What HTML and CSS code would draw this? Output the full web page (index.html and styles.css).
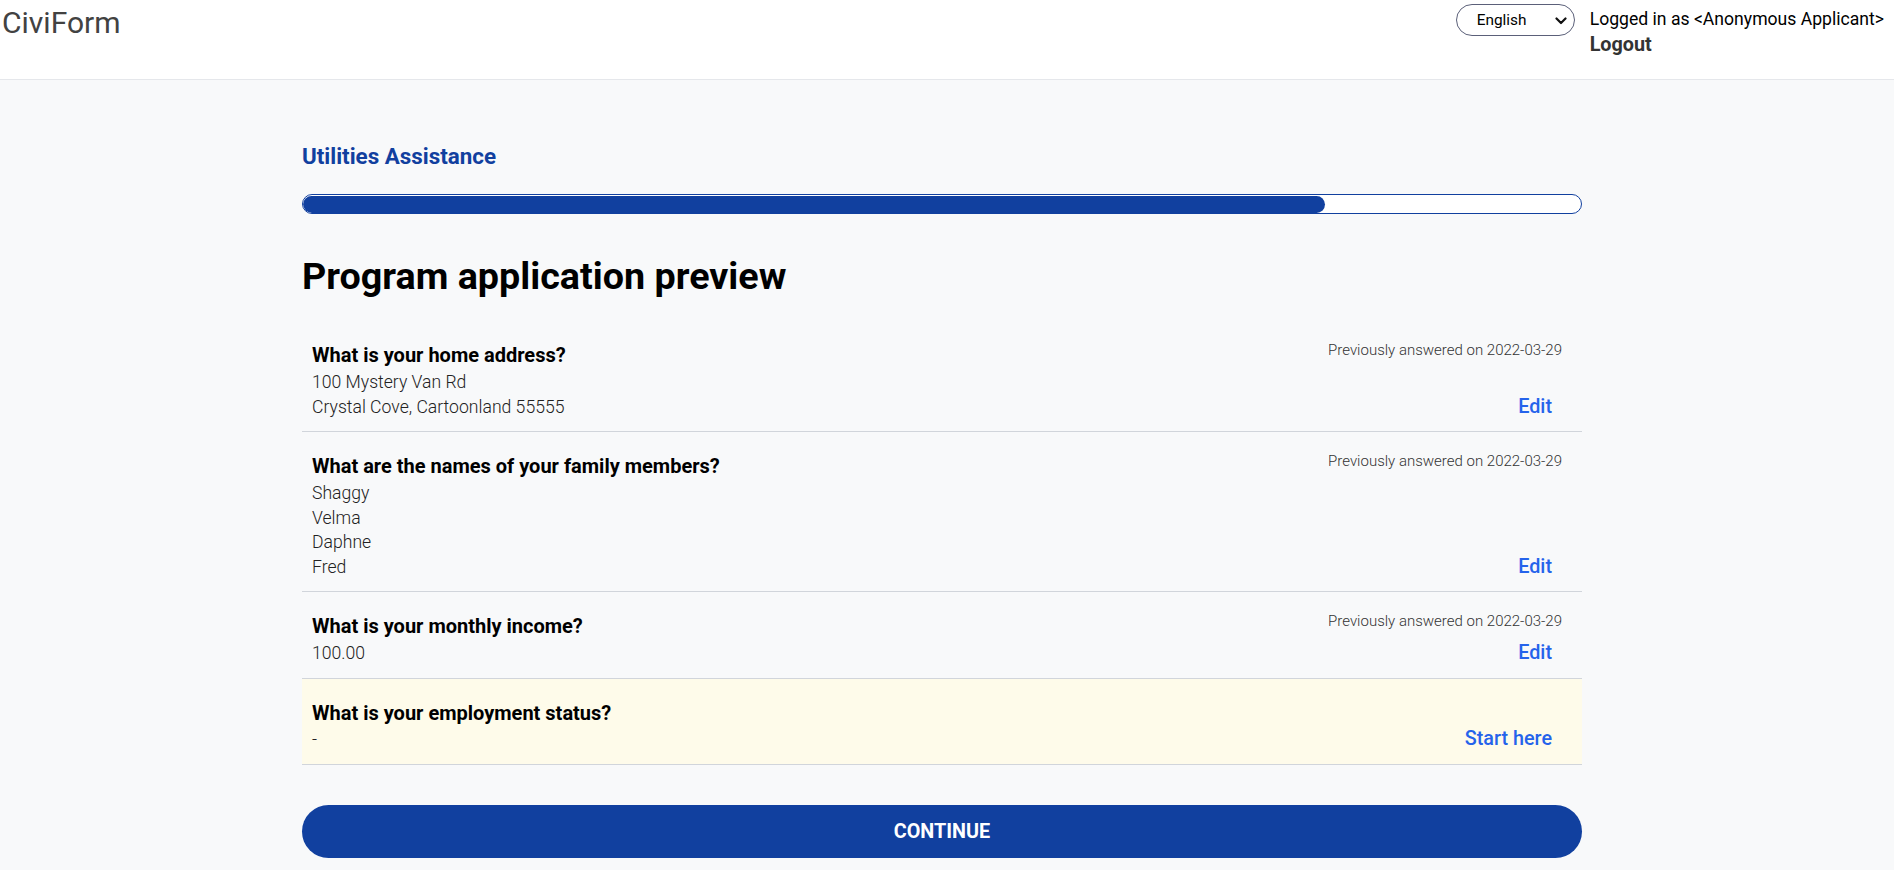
FILE: index.html
```html
<!DOCTYPE html>
<html lang="en">
<head>
<meta charset="utf-8">
<title>CiviForm - Program application preview</title>
<link rel="stylesheet" href="styles.css">
</head>
<body>
<header class="topbar">
  <div class="brand">CiviForm</div>
  <div class="account">
    <div class="lang-wrap">
      <select class="lang" aria-label="Language">
        <option>English</option>
        <option>Español</option>
      </select>
      <svg class="lang-chevron" width="12" height="8" viewBox="0 0 12 8" aria-hidden="true"><path d="M1.5 1.5 L6 6 L10.5 1.5" fill="none" stroke="#111" stroke-width="2.2" stroke-linecap="round" stroke-linejoin="round"/></svg>
    </div>
    <div class="user">
      <div class="user-name">Logged in as &lt;Anonymous Applicant&gt;</div>
      <a class="logout" href="#">Logout</a>
    </div>
  </div>
</header>
<main class="page">
  <div class="container">
    <div class="program-title">Utilities Assistance</div>
    <div class="progress"><div class="progress-fill" style="width: 80%"></div></div>
    <h1 class="heading">Program application preview</h1>

    <div class="summary-row">
      <div class="q-col">
        <div class="question">What is your home address?</div>
        <div class="answer">100 Mystery Van Rd</div>
        <div class="answer">Crystal Cove, Cartoonland 55555</div>
      </div>
      <div class="meta-col">
        <div class="timestamp">Previously answered on 2022-03-29</div>
        <a class="edit" href="#">Edit</a>
      </div>
    </div>

    <div class="summary-row">
      <div class="q-col">
        <div class="question">What are the names of your family members?</div>
        <div class="answer">Shaggy</div>
        <div class="answer">Velma</div>
        <div class="answer">Daphne</div>
        <div class="answer">Fred</div>
      </div>
      <div class="meta-col">
        <div class="timestamp">Previously answered on 2022-03-29</div>
        <a class="edit" href="#">Edit</a>
      </div>
    </div>

    <div class="summary-row">
      <div class="q-col">
        <div class="question">What is your monthly income?</div>
        <div class="answer">100.00</div>
      </div>
      <div class="meta-col">
        <div class="timestamp">Previously answered on 2022-03-29</div>
        <a class="edit" href="#">Edit</a>
      </div>
    </div>

    <div class="summary-row unanswered">
      <div class="q-col">
        <div class="question">What is your employment status?</div>
        <div class="answer">-</div>
      </div>
      <div class="meta-col">
        <a class="edit" href="#">Start here</a>
      </div>
    </div>

    <button class="continue" type="button">Continue</button>
  </div>
</main>
</body>
</html>
```
FILE: styles.css
```css
* { box-sizing: border-box; }

html, body {
  margin: 0;
  padding: 0;
}

body {
  font-family: Roboto, "Liberation Sans", Arial, sans-serif;
  background: #f8f9fa;
  color: #000;
  line-height: 1.4;
  min-height: 870px;
}

.topbar {
  background: #ffffff;
  height: 80px;
  border-bottom: 1px solid #e5e7eb;
  display: flex;
  justify-content: space-between;
  align-items: flex-start;
  padding: 0 10px 0 2px;
}

.brand {
  font-size: 30px;
  line-height: 36px;
  margin-top: 5px;
  color: #424242;
  font-weight: 400;
}

.account {
  display: flex;
  align-items: flex-start;
  gap: 15px;
}

.lang-wrap {
  position: relative;
  margin-top: 4px;
}

.lang {
  appearance: none;
  -webkit-appearance: none;
  width: 119px;
  height: 32px;
  border: 1px solid #5b6079;
  border-radius: 9999px;
  background: #ffffff;
  font-family: Roboto, "Liberation Sans", Arial, sans-serif;
  font-size: 15.4px;
  color: #000;
  padding: 0 0 0 20px;
}

.lang-chevron {
  position: absolute;
  right: 8px;
  top: 13px;
  pointer-events: none;
}

.user {
  display: flex;
  flex-direction: column;
  padding-top: 6.5px;
}

.user-name {
  font-size: 17.6px;
  color: #000;
}

.logout {
  font-size: 19.8px;
  font-weight: 700;
  color: #333;
  text-decoration: none;
}

.page {
  padding: 0 10px 0 0;
}

.container {
  width: 1280px;
  margin: 0 auto;
  padding-top: 61px;
}

.program-title {
  font-size: 22.4px;
  font-weight: 700;
  color: #11409f;
  line-height: 30px;
}

.progress {
  margin-top: 23px;
  height: 20px;
  border: 1px solid #11409f;
  border-radius: 9999px;
  background: #ffffff;
  padding-top: 0.5px;
  overflow: hidden;
}

.progress-fill {
  height: 17px;
  background: #11409f;
  border-radius: 9999px;
}

.heading {
  font-size: 37.7px;
  font-weight: 700;
  line-height: 1.4;
  margin: 36px 0 18.5px;
}

.summary-row {
  display: flex;
  justify-content: space-between;
  align-items: stretch;
  border-bottom: 1px solid #d1d5db;
}

.summary-row.unanswered {
  background: #fefbea;
}

.q-col {
  padding: 21px 0 12px 10px;
}

.question {
  font-size: 20px;
  line-height: 27.7px;
  font-weight: 700;
  color: #000;
}

.answer {
  font-size: 17.6px;
  font-weight: 300;
  color: #222;
}

.meta-col {
  display: flex;
  flex-direction: column;
  justify-content: space-between;
  align-items: flex-end;
  padding: 19px 20px 11px 0;
}

.timestamp {
  font-size: 15px;
  font-weight: 300;
  color: #333;
}

.edit {
  margin-top: auto;
  margin-right: 10px;
  font-size: 19.8px;
  font-weight: 500;
  color: #2563eb;
  text-decoration: none;
}

.continue {
  display: block;
  width: 100%;
  height: 53px;
  margin-top: 40px;
  border: none;
  border-radius: 9999px;
  background: #11409f;
  color: #ffffff;
  font-family: Roboto, "Liberation Sans", Arial, sans-serif;
  font-size: 19.8px;
  font-weight: 700;
  text-transform: uppercase;
  cursor: pointer;
}
```
